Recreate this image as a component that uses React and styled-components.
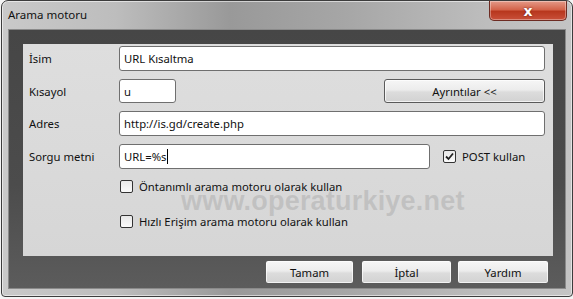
import styled, { createGlobalStyle } from 'styled-components';

const GlobalStyle = createGlobalStyle`
  html, body {
    margin: 0;
    padding: 0;
    background: #f4f4f4;
    font-family: "Noto Sans", "Open Sans", sans-serif;
  }
`;

const Window = styled.div`
  position: relative;
  width: 570px;
  height: 295px;
  margin: 0 1px 0 1px;
  border: 1px solid #3c3c3c;
  border-radius: 7px 7px 4px 4px;
  background: linear-gradient(90deg, #c9c9c9 0%, #bdbdbd 20%, #999 40%, #a6a6a6 60%, #bdbdbd 85%, #c4c4c4 100%);
  box-shadow: inset 0 0 0 1px rgba(255, 255, 255, 0.55);
  display: flex;
  flex-direction: column;
  overflow: hidden;
`;

const TitleBar = styled.div`
  height: 28px;
  display: flex;
  align-items: center;
  justify-content: space-between;
  padding-left: 6px;
`;

const Title = styled.span`
  font-size: 11.5px;
  color: #111;
  margin-top: -1px;
`;

const CloseButton = styled.div`
  align-self: flex-start;
  width: 76px;
  height: 19px;
  margin-right: 5px;
  border: 1px solid #6d2b22;
  border-top: none;
  border-radius: 0 0 5px 5px;
  background: linear-gradient(180deg, #e49a88 0%, #d4644b 45%, #b8371e 55%, #c9503a 100%);
  box-shadow: inset 0 0 0 1px rgba(255, 255, 255, 0.35);
  display: flex;
  align-items: center;
  justify-content: center;
  color: #fff;
  font-family: "DejaVu Sans", sans-serif;
  font-weight: bold;
  font-size: 14px;
  text-shadow: 0 0 2px #5a1a10;
`;

const Client = styled.div`
  flex: 1;
  margin: 0 6px 7px 6px;
  border: 1px solid #8a8a8a;
  background: linear-gradient(180deg, #464646 0%, #4c4c4c 60%, #5c5c5c 100%);
  padding: 14px 12px 4px 14px;
  display: flex;
  flex-direction: column;
`;

const Panel = styled.div`
  position: relative;
  background: linear-gradient(180deg, #dedede 0%, #d6d6d6 100%);
  padding: 2px 8px 10px 6px;
  height: 200px;
`;

const Grid = styled.div`
  display: grid;
  grid-template-columns: 90px 1fr;
  row-gap: 8px;
  align-items: center;
`;

const Label = styled.span`
  font-size: 11.3px;
  color: #111;
`;

const Field = styled.div`
  display: flex;
  align-items: center;
`;

const Input = styled.div`
  box-sizing: border-box;
  height: ${({ $h }) => $h || 25}px;
  width: ${({ $w }) => ($w ? `${$w}px` : '100%')};
  background: #fff;
  border: 1px solid #6f6f6f;
  border-radius: 3px;
  padding: 0 4px;
  display: flex;
  align-items: center;
  font-size: 11.3px;
  color: #111;
  flex-shrink: 0;
`;

const Caret = styled.span`
  display: inline-block;
  width: 1px;
  height: 15px;
  background: #000;
  margin-left: 1px;
`;

const Button = styled.div`
  box-sizing: border-box;
  width: ${({ $w }) => $w}px;
  height: ${({ $h }) => $h || 24}px;
  margin-left: ${({ $ml }) => $ml || 0}px;
  border: 1px solid #5a5a5a;
  border-radius: 3px;
  background: linear-gradient(180deg, #f6f6f6 0%, #ececec 45%, #dcdcdc 55%, #d2d2d2 100%);
  box-shadow: inset 0 0 0 1px rgba(255, 255, 255, 0.7);
  display: flex;
  align-items: center;
  justify-content: center;
  font-size: 11.3px;
  color: #111;
  flex-shrink: 0;
`;

const CheckRow = styled.label`
  display: flex;
  align-items: center;
  gap: 6px;
  font-size: 11.3px;
  color: #111;
  margin-left: ${({ $ml }) => $ml || 0}px;
  margin-top: ${({ $mt }) => $mt || 0}px;
`;

const Box = styled.span`
  box-sizing: border-box;
  width: 13px;
  height: 13px;
  border: 1px solid #333;
  border-radius: 2px;
  background: linear-gradient(180deg, #e8e8e8 0%, #fafafa 100%);
  display: flex;
  align-items: center;
  justify-content: center;
`;

const Options = styled.div`
  display: flex;
  flex-direction: column;
  padding-left: 91px;
  margin-top: 10px;
`;

const Watermark = styled.div`
  position: absolute;
  left: 158px;
  top: 142px;
  font-family: "Liberation Sans", Arial, sans-serif;
  font-weight: bold;
  font-size: 27px;
  letter-spacing: 0.2px;
  color: rgba(150, 150, 150, 0.35);
  pointer-events: none;
`;

const Footer = styled.div`
  display: flex;
  justify-content: flex-end;
  padding-right: 4px;
  margin-top: 4px;
`;

const Check = ({ checked }) => (
  <Box>
    {checked && (
      <svg width="9" height="9" viewBox="0 0 9 9">
        <path d="M1 4.5 L3.5 7 L8 1.5" fill="none" stroke="#222" strokeWidth="1.8" />
      </svg>
    )}
  </Box>
);

export default function App() {
  return (
    <>
      <GlobalStyle />
      <Window>
        <TitleBar>
          <Title>Arama motoru</Title>
          <CloseButton>x</CloseButton>
        </TitleBar>
        <Client>
          <Panel>
            <Grid>
              <Label>İsim</Label>
              <Input>URL Kısaltma</Input>

              <Label>Kısayol</Label>
              <Field>
                <Input $w={57} $h={24}>u</Input>
                <Button $w={161} $ml={208}>Ayrıntılar &lt;&lt;</Button>
              </Field>

              <Label>Adres</Label>
              <Input>http://is.gd/create.php</Input>

              <Label>Sorgu metni</Label>
              <Field>
                <Input $w={311}>URL=%s<Caret /></Input>
                <CheckRow $ml={13}>
                  <Check checked />
                  POST kullan
                </CheckRow>
              </Field>
            </Grid>
            <Options>
              <CheckRow>
                <Check />
                Öntanımlı arama motoru olarak kullan
              </CheckRow>
              <CheckRow $mt={20}>
                <Check />
                Hızlı Erişim arama motoru olarak kullan
              </CheckRow>
            </Options>
            <Watermark>www.operaturkiye.net</Watermark>
          </Panel>
          <Footer>
            <Button $w={89}>Tamam</Button>
            <Button $w={91} $ml={7}>İptal</Button>
            <Button $w={92} $ml={5}>Yardım</Button>
          </Footer>
        </Client>
      </Window>
    </>
  );
}
